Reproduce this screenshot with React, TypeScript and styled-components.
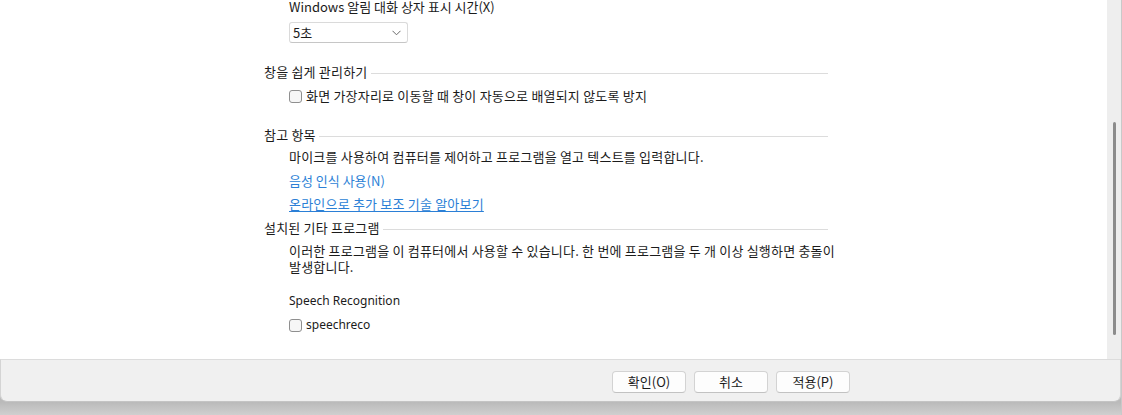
import React from 'react';
import styled, { createGlobalStyle } from 'styled-components';

const GlobalStyle = createGlobalStyle`
  html, body {
    margin: 0;
    padding: 0;
    background: #c9c9c9;
  }
  body {
    font-family: "Noto Sans", "Noto Sans CJK KR", sans-serif;
    font-size: 12px;
    color: #1b1b1b;
  }
`;

// Korean text runs a bit wider in the original (Malgun Gothic), so CJK lines get 13px
const ko = `
  font-family: "Noto Sans CJK KR", "Noto Sans", sans-serif;
  font-size: 13px;
  word-break: keep-all;
`;

const koWide = `
  ${ko}
  letter-spacing: 0.2px;
`;

const Window = styled.div`
  width: 1121px;
  height: 415px;
  display: flex;
  flex-direction: column;
  background: linear-gradient(#bababa 0, #bababa 402px, #cfcfcf 415px);
`;

const Body = styled.div`
  height: 359px;
  display: flex;
  background: #ffffff;
`;

const Content = styled.div`
  flex: 1;
  overflow: hidden;
  padding-left: 264px;
  display: flex;
  flex-direction: column;
  align-items: flex-start;
`;

const Scrollbar = styled.div`
  width: 14px;
  background: #eeeeee;
  display: flex;
  justify-content: center;
  padding-top: 122px;
  box-sizing: border-box;
`;

const Thumb = styled.div`
  width: 3px;
  height: 213px;
  border-radius: 2px;
  background: #8c8c8c;
  margin-left: 1px;
`;

const Line = styled.div<{ $top: number; $indent?: boolean; $ko?: 'mixed' | 'wide' }>`
  line-height: 16px;
  height: 16px;
  white-space: nowrap;
  margin-top: ${(p) => p.$top}px;
  margin-left: ${(p) => (p.$indent ? 25 : 0)}px;
  ${(p) => (p.$ko === 'mixed' ? ko : p.$ko === 'wide' ? koWide : '')}
`;

// first label is scrolled right up to the top edge
const TopLabel = styled(Line)`
  height: 14px;
  line-height: 13px;
`;

const Paragraph = styled.div<{ $top: number }>`
  ${koWide}
  line-height: 16px;
  margin-top: ${(p) => p.$top}px;
  margin-left: 25px;
  width: 565px;
`;

const Heading = styled.div<{ $top: number }>`
  ${koWide}
  display: flex;
  align-items: center;
  width: 564px;
  height: 16px;
  line-height: 16px;
  margin-top: ${(p) => p.$top}px;
  white-space: nowrap;

  &::after {
    content: '';
    flex: 1;
    height: 1px;
    margin-left: 3px;
    margin-top: 2px;
    background: #dcdcdc;
  }
`;

const Select = styled.div`
  ${ko}
  margin-top: 8px;
  margin-left: 25px;
  width: 119px;
  height: 21px;
  box-sizing: border-box;
  border: 1px solid #dadada;
  border-bottom-color: #c6c6c6;
  border-radius: 3px;
  background: #ffffff;
  display: flex;
  align-items: center;
  justify-content: space-between;
  padding: 0 6px 0 3px;
`;

const CheckRow = styled.label<{ $top: number; $ko?: boolean }>`
  display: flex;
  align-items: center;
  gap: 4px;
  height: 16px;
  line-height: 16px;
  margin-top: ${(p) => p.$top}px;
  margin-left: 25px;
  white-space: nowrap;
  ${(p) => (p.$ko ? koWide : '')}
`;

const Box = styled.span`
  width: 13px;
  height: 13px;
  box-sizing: border-box;
  border: 1px solid #8f8f8f;
  border-radius: 3px;
  background: #f6f6f6;
`;

const Link = styled.a<{ $underline?: boolean }>`
  color: #2b7fd6;
  text-decoration: ${(p) => (p.$underline ? 'underline' : 'none')};
  text-underline-offset: 2px;
  cursor: pointer;
`;

const Footer = styled.div`
  height: 43px;
  box-sizing: border-box;
  background: #f0f0f0;
  border-top: 1px solid #dcdcdc;
  border-left: 1px solid #d4d4d4;
  border-right: 1px solid #d4d4d4;
  border-bottom: 1px solid #c4c4c4;
  border-radius: 0 0 7px 7px;
  display: flex;
  align-items: flex-start;
  padding-top: 11px;
  padding-left: 611px;
  gap: 8px;
`;

const Button = styled.button`
  ${ko}
  width: 74px;
  height: 22px;
  box-sizing: border-box;
  border: 1px solid #d3d3d3;
  border-bottom-color: #c2c2c2;
  border-radius: 4px;
  background: #fdfdfd;
  color: #1b1b1b;
  padding: 0;
  line-height: 18px;
`;

const Chevron = () => (
  <svg width="9" height="6" viewBox="0 0 9 6">
    <polyline points="0.5,0.8 4.5,4.8 8.5,0.8" fill="none" stroke="#6a6a6a" strokeWidth="1" />
  </svg>
);

const App: React.FC = () => {
  return (
    <>
      <GlobalStyle />
      <Window>
        <Body>
          <Content>
            <TopLabel $top={0} $indent $ko="mixed">Windows 알림 대화 상자 표시 시간(X)</TopLabel>
            <Select>
              <span>5초</span>
              <Chevron />
            </Select>

            <Heading $top={21}>창을 쉽게 관리하기</Heading>
            <CheckRow $top={8} $ko>
              <Box />
              화면 가장자리로 이동할 때 창이 자동으로 배열되지 않도록 방지
            </CheckRow>

            <Heading $top={23}>참고 항목</Heading>
            <Line $top={6} $indent $ko="wide">마이크를 사용하여 컴퓨터를 제어하고 프로그램을 열고 텍스트를 입력합니다.</Line>
            <Line $top={8} $indent $ko="mixed">
              <Link>음성 인식 사용(N)</Link>
            </Line>
            <Line $top={7} $indent $ko="wide">
              <Link $underline>온라인으로 추가 보조 기술 알아보기</Link>
            </Line>

            <Heading $top={8}>설치된 기타 프로그램</Heading>
            <Paragraph $top={7}>
              이러한 프로그램을 이 컴퓨터에서 사용할 수 있습니다. 한 번에 프로그램을 두 개 이상 실행하면 충돌이 발생합니다.
            </Paragraph>
            <Line $top={18} $indent>Speech Recognition</Line>
            <CheckRow $top={8}>
              <Box />
              speechreco
            </CheckRow>
          </Content>
          <Scrollbar>
            <Thumb />
          </Scrollbar>
        </Body>
        <Footer>
          <Button>확인(O)</Button>
          <Button>취소</Button>
          <Button>적용(P)</Button>
        </Footer>
      </Window>
    </>
  );
};

export default App;
